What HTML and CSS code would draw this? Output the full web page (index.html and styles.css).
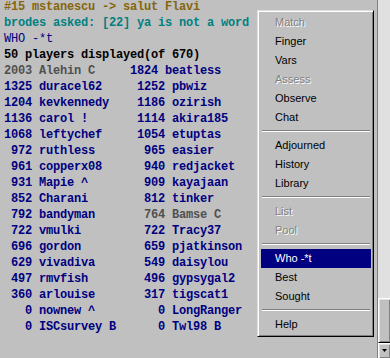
FILE: index.html
```html
<!DOCTYPE html>
<html lang="en">
<head>
    <meta charset="UTF-8">
    <title>Who -*t</title>
    <link rel="stylesheet" href="styles.css">
</head>
<body>
<div class="console">
    <div class="line tell">#15 mstanescu -&gt; salut Flavi</div>
    <div class="line asked">brodes asked: [22] ya is not a word</div>
    <div class="line cmd">WHO -*t</div>
    <div class="line info">50 players displayed(of 670)</div>
    <div class="line"><span class="guest">2003 Alehin C     </span>1824 beatless</div>
    <div class="line">1325 duracel62     1252 pbwiz</div>
    <div class="line">1204 kevkennedy    1186 ozirish</div>
    <div class="line">1136 carol !       1114 akira185</div>
    <div class="line">1068 leftychef     1054 etuptas</div>
    <div class="line"> 972 ruthless       965 easier</div>
    <div class="line"> 961 copperx08      940 redjacket</div>
    <div class="line"> 931 Mapie ^        909 kayajaan</div>
    <div class="line"> 852 Charani        812 tinker</div>
    <div class="line"> 792 bandyman      <span class="guest"> 764 Bamse C</span></div>
    <div class="line"> 722 vmulki         722 Tracy37</div>
    <div class="line"> 696 gordon         659 pjatkinson</div>
    <div class="line"> 629 vivadiva       549 daisylou</div>
    <div class="line"> 497 rmvfish        496 gypsygal2</div>
    <div class="line"> 360 arlouise       317 tigscat1</div>
    <div class="line">   0 nownew ^         0 LongRanger</div>
    <div class="line">   0 ISCsurvey B      0 Twl98 B</div>
</div>

<div class="scrollbar">
    <div class="track">
        <div class="thumb"></div>
    </div>
    <div class="arrow-btn">
        <svg width="5" height="3" viewBox="0 0 5 3"><polygon points="0,0 5,0 2.5,3" fill="#000"/></svg>
    </div>
</div>

<div class="popup-menu">
    <div class="item disabled">Match</div>
    <div class="item">Finger</div>
    <div class="item">Vars</div>
    <div class="item disabled">Assess</div>
    <div class="item">Observe</div>
    <div class="item">Chat</div>
    <div class="separator"></div>
    <div class="item">Adjourned</div>
    <div class="item">History</div>
    <div class="item">Library</div>
    <div class="separator"></div>
    <div class="item disabled">List</div>
    <div class="item disabled">Pool</div>
    <div class="separator"></div>
    <div class="item selected">Who -*t</div>
    <div class="item">Best</div>
    <div class="item">Sought</div>
    <div class="separator"></div>
    <div class="item">Help</div>
</div>
</body>
</html>
```

FILE: styles.css
```css
body {
    margin: 0;
    width: 390px;
    height: 358px;
    overflow: hidden;
    background-color: #c0c0c0;
    display: flex;
}
.console {
    flex: 1;
    margin-top: -1px;
    padding-left: 4px;
    font-family: "Liberation Mono", monospace;
    font-weight: bold;
    font-size: 12px;
    letter-spacing: -0.2px;
    line-height: 16px;
    color: #000080;
}
.line {
    white-space: pre;
}
.tell {
    color: #86660c;
}
.asked {
    color: #008080;
}
.cmd {
    color: #000080;
    font-weight: normal;
}
.info {
    color: #000;
}
.guest {
    color: #505050;
}
.scrollbar {
    width: 12px;
    border-left: 1px solid #808080;
    display: flex;
    flex-direction: column;
}
.track {
    flex: 1;
    background-color: #e0e0e0;
    display: flex;
    flex-direction: column;
    justify-content: flex-end;
}
.thumb,
.arrow-btn {
    background-color: #c0c0c0;
    box-sizing: border-box;
    border-top: 1px solid #fff;
    border-left: 1px solid #fff;
    border-bottom: 1px solid #000;
    box-shadow: inset 1px 1px #dfdfdf, inset -1px -1px #808080;
}
.thumb {
    height: 45px;
}
.arrow-btn {
    flex: 0 0 15px;
    display: flex;
    justify-content: center;
    padding-top: 5px;
    border-bottom: none;
}
.arrow-btn svg {
    display: block;
}
.popup-menu {
    position: absolute;
    left: 257px;
    top: 10px;
    width: 117px;
    box-sizing: border-box;
    padding: 2px 2px 2px 3px;
    background-color: #c0c0c0;
    border: 1px solid;
    border-color: #dfdfdf #000 #000 #dfdfdf;
    box-shadow: inset 1px 1px #fff, inset -1px -1px #808080;
    font-family: "Liberation Sans", Arial, sans-serif;
    font-size: 11px;
    color: #000;
}
.item {
    height: 19px;
    line-height: 19px;
    padding-left: 14px;
    white-space: nowrap;
}
.item.disabled {
    color: #808080;
    text-shadow: 1px 1px #fff;
}
.item.selected {
    background-color: #000080;
    color: #fff;
}
.separator {
    margin: 3px 1px 4px 1px;
    border-top: 1px solid #808080;
    border-bottom: 1px solid #fff;
}
```
